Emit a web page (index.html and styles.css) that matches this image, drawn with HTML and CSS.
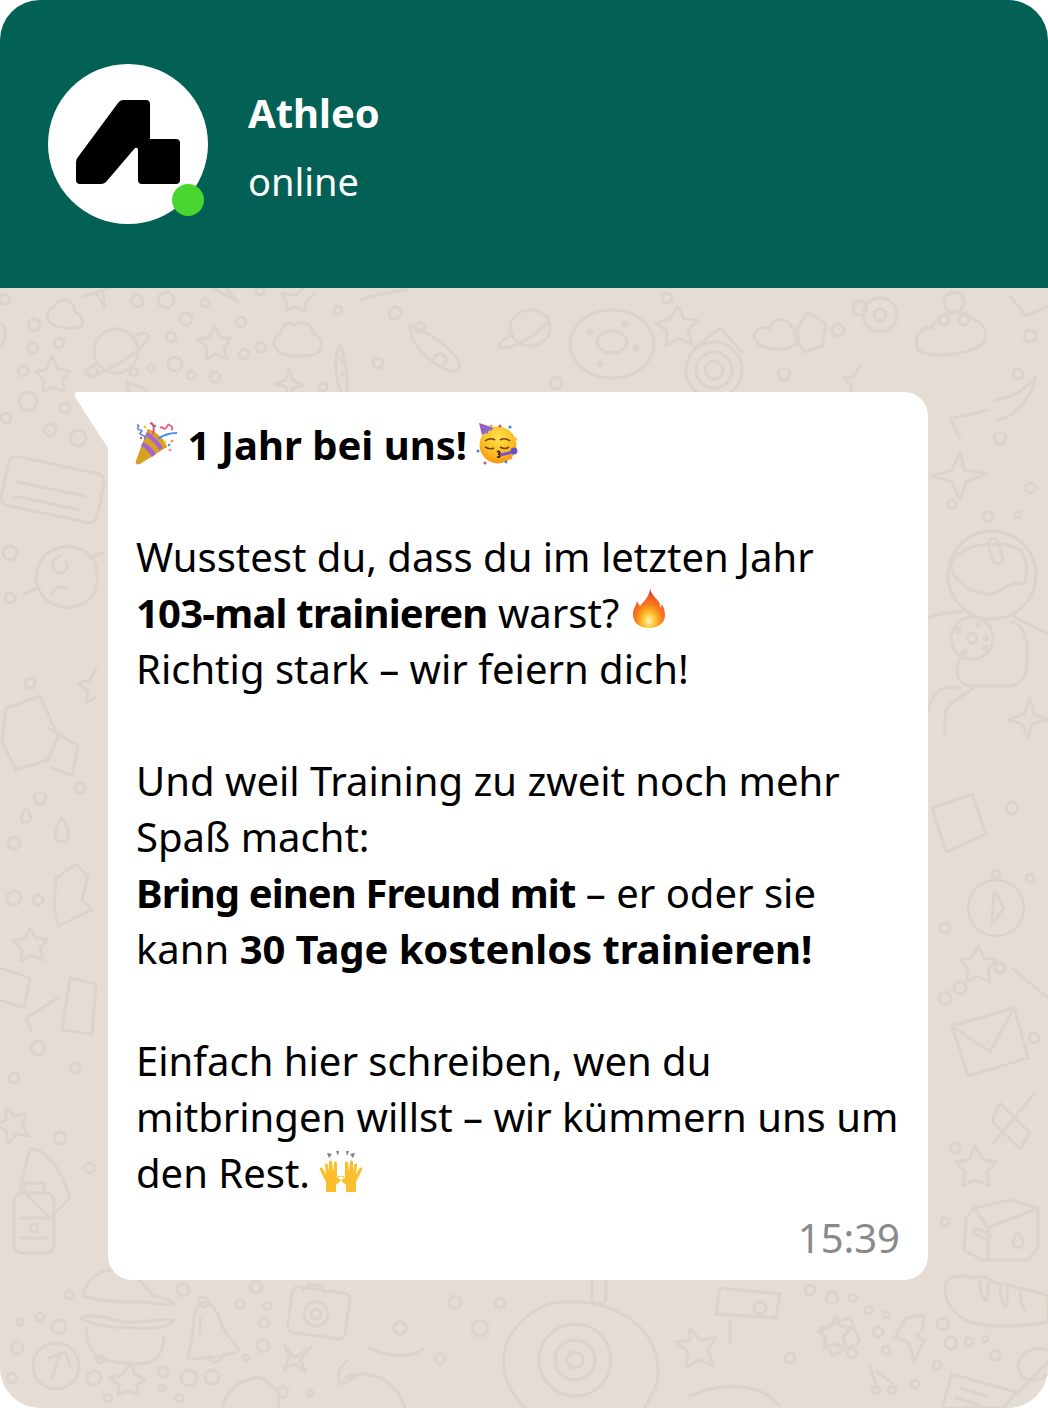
FILE: index.html
```html
<!DOCTYPE html>
<html lang="de">
<head>
<meta charset="utf-8">
<title>Athleo</title>
<link rel="stylesheet" href="styles.css">
</head>
<body>
<main class="phone">
  <header class="head">
    <div class="avatar">
      <svg class="logo" viewBox="0 0 104 84" width="104" height="84"><path fill="#000" d="M47 0H70Q74 0 74 4V39H100Q104 39 104 43V80Q104 84 100 84H66Q62 84 62 80V50Q62 47 59 48L30 82Q28 84 25 84H4Q0 84 0 80V62Q0 59 2 57L42 3Q44 0 47 0Z"/></svg>
      <span class="dot"></span>
    </div>
    <div class="who">
      <div class="name">Athleo</div>
      <div class="status">online</div>
    </div>
  </header>
  <section class="chat">
    <svg class="wall" viewBox="0 0 1048 1120" width="1048" height="1120" fill="none" stroke="#dcd4ca" stroke-width="3" stroke-linejoin="round" stroke-linecap="round">
      <g>
        <circle cx="5" cy="11" r="5"/><path d="M52 36c-7-6-6-16 2-17 2-7 13-10 18-4 3 6 2 8 4 10 7 2 8 12 4 14-9 2-20 1-28-3z"/><path d="M84 8l14-4 11-4M96 5l9 14-2-14"/><circle cx="137" cy="13" r="6"/><circle cx="166" cy="12" r="8"/><circle cx="205" cy="15" r="4"/><circle cx="260" cy="3" r="4"/><path d="M213 0l25 14-12-14"/><path d="M282 5l14 2 7-7M282 5l5 10-1 7 10-3 9 5 1-10 8-8"/><circle cx="338" cy="22" r="4"/>
        <path d="M0 36c7 2 8 16 0 22"/><circle cx="34" cy="37" r="6"/><circle cx="33" cy="60" r="5"/><circle cx="59" cy="55" r="5"/><circle cx="23" cy="83" r="5"/>
        <circle cx="116" cy="63" r="22"/><path d="M97 75c-11 6-14 10-11 12 6 3 20-4 37-14 17-11 28-22 25-26-2-3-7-2-12 0"/>
        <circle cx="186" cy="31" r="6"/><circle cx="171" cy="49" r="5"/><path d="M214 38l7 12 9 0-6 12 3 9-11-5-10 6 1-13-10-8 13-2z"/><circle cx="241" cy="34" r="5"/><circle cx="244" cy="66" r="5"/><circle cx="261" cy="59" r="5"/>
        <path d="M283 66c-10-3-12-17-3-20 1-9 9-13 15-9 7-5 17-2 18 9 8 1 12 14 4 19-9 4-24 4-34 1z"/><path d="M340 56c-7 14-5 36 2 50M340 56c6 16 9 36 7 50M340 70l5 6M342 85l5 4"/>
        <path d="M52 68l6 13 12 2-8 9 2 12-11-5-10 5 1-12-8-8 11-3z"/><circle cx="93" cy="84" r="5"/><circle cx="134" cy="84" r="4"/><circle cx="151" cy="80" r="3"/><circle cx="175" cy="76" r="7"/><circle cx="191" cy="87" r="4"/><circle cx="215" cy="89" r="5"/><path d="M289 80l3 12 11 5-10 3-3 10-4-11-11-3 11-4z"/><circle cx="323" cy="99" r="4"/>
        <path d="M127 94l20 8-6 6-12 0z"/>
        <circle cx="395" cy="25" r="6"/><circle cx="420" cy="40" r="5"/><circle cx="440" cy="72" r="6"/><circle cx="378" cy="75" r="5"/>
        <path d="M410 38c14 4 26 12 38 22 10 10 14 18 10 22-6 4-22-4-34-16-8-8-14-16-14-28z"/><path d="M360 12c18-6 30-8 46-10"/>
        <ellipse cx="530" cy="40" rx="20" ry="18"/><path d="M512 46c-10 6-16 12-12 14 8 2 30-8 44-22 6-6 6-10 2-10"/>
        <ellipse cx="612" cy="56" rx="42" ry="34"/><ellipse cx="612" cy="54" rx="15" ry="11"/><circle cx="590" cy="44" r="2"/><circle cx="636" cy="60" r="2"/><circle cx="600" cy="76" r="2"/><circle cx="625" cy="36" r="2"/>
        <circle cx="667" cy="10" r="5"/><circle cx="556" cy="95" r="6"/><path d="M678 18l6 13 14 1-10 10 4 14-14-6-12 8 1-15-11-8 14-4z"/>
        <circle cx="714" cy="82" r="28"/><circle cx="714" cy="82" r="18"/><circle cx="714" cy="82" r="9"/><path d="M694 60l26-20 22 24"/>
        <path d="M757 55c-8-8 2-20 12-14 2-10 18-14 22-2 10 2 10 16 0 20-12 4-26 2-34-4z"/><path d="M808 24l18 12-4 22-18 6-10-18z"/><circle cx="838" cy="42" r="6"/><circle cx="860" cy="20" r="7"/><circle cx="784" cy="86" r="6"/>
        <circle cx="880" cy="27" r="17"/><circle cx="880" cy="27" r="6"/><circle cx="954" cy="14" r="10"/><path d="M860 78l-6 10-10 2 8 8-1 6"/>
        <path d="M918 62c-6-14 4-24 14-22 2-14 30-22 42-8 12 2 16 20 6 26-18 10-52 12-62 4z"/><circle cx="944" cy="32" r="5"/><circle cx="964" cy="32" r="5"/><circle cx="1030" cy="48" r="6"/><circle cx="1018" cy="86" r="5"/><path d="M1010 8l16 20 22-10"/>
      </g>
      <g>
        <rect x="4" y="176" width="98" height="50" rx="8" transform="rotate(12 50 200)"/><path d="M18 194l66 14M14 208l66 14"/>
        <circle cx="28" cy="113" r="9"/><circle cx="50" cy="142" r="6"/><circle cx="6" cy="130" r="5"/><circle cx="65" cy="120" r="5"/><circle cx="78" cy="150" r="8"/>
        <path d="M36 290c0-26 28-40 50-26 14 8 16 38 0 50-14 10-46 8-50-24z"/><path d="M60 268c-8 2-10 12-4 16 8 4 14-4 10-10M66 300c-8-4-14 2-14 8"/><path d="M38 300l-14 6M90 270l14-6"/>
        <circle cx="10" cy="265" r="7"/><circle cx="10" cy="310" r="5"/><path d="M96 380l-6 12-12 3 10 8-2 12 10-6"/>
        <path d="M6 420l34-12 18 40-10 24-32 10-14-28z"/><path d="M48 440l30 18-6 30-20-8"/><circle cx="30" cy="395" r="5"/>
        <path d="M62 530c-10 14-8 24 0 24s10-10 0-24zM26 520c-6 8-6 14 0 14s6-6 0-14z"/>
        <circle cx="40" cy="510" r="6"/><circle cx="14" cy="555" r="6"/><circle cx="80" cy="500" r="5"/><circle cx="38" cy="612" r="5"/><circle cx="14" cy="610" r="7"/>
        <path d="M56 590l20-14 12 12-6 24 10 10-34 16-4-20z"/>
        <path d="M30 640l6 10 12 1-8 9 3 12-12-5-10 6 1-12-9-8 12-3z"/>
        <path d="M70 690l26 6-4 50-30-4z"/><path d="M58 710l-32 20 6 14M0 680l30 10-6 30-24-8"/><circle cx="38" cy="760" r="7"/><circle cx="14" cy="790" r="5"/><circle cx="75" cy="780" r="5"/>
        <path d="M6 820l8 8 12-2-4 12 8 10-14-2-8 10-2-14-12-4 12-6z"/><path d="M30 860c20 4 30 20 40 50l-20 20-30-30z"/><circle cx="60" cy="850" r="6"/><circle cx="90" cy="880" r="5"/>
      </g>
      <g>
        <path d="M932 188l20-6 8-18 4 18 22 4-20 8-6 18-8-18z"/><path d="M996 112c14-2 28-8 40-24-4 22-20 40-38 44"/><circle cx="1000" cy="150" r="6"/><circle cx="1030" cy="200" r="5"/><circle cx="952" cy="216" r="4"/><circle cx="988" cy="229" r="5"/><circle cx="1018" cy="227" r="3"/><path d="M954 130l34-8M960 150l-10-20"/>
        <circle cx="992" cy="287" r="44"/><path d="M950 278c6-22 50-28 70-16 8 10 8 24 4 34-12-4-20 6-32 10-16 0-34-6-42-28z"/><rect x="990" cy="270" y="250" width="10" height="26" rx="5" transform="rotate(-16 995 262)"/>
        <path d="M928 330c10-4 20-6 34-6M1012 328l36 18"/><circle cx="972" cy="350" r="21"/><circle cx="972" cy="350" r="5"/><circle cx="958" cy="342" r="2"/><circle cx="978" cy="336" r="2"/><circle cx="986" cy="350" r="2"/><circle cx="964" cy="364" r="2"/><circle cx="986" cy="360" r="2"/>
        <path d="M1012 334c14 4 18 22 14 50-2 8-8 12-14 14h-40c-16 0-20-20-8-32M975 398c-8 10-30 14-30 30v20M960 400c-18-4-30 6-32 24"/><path d="M1030 410l4 16 14 6-16 4-4 14-6-14-14-4 16-6z"/>
        <path d="M932 520l40-14 14 40-40 18z"/><circle cx="1012" cy="520" r="6"/><circle cx="996" cy="620" r="28"/><path d="M996 604l8 16-12 16 2-32z"/><circle cx="996" cy="586" r="4"/>
        <circle cx="945" cy="640" r="5"/><circle cx="1030" cy="590" r="4"/><circle cx="960" cy="700" r="6"/><circle cx="1000" cy="680" r="5"/><path d="M978 658l6 12 12 2-8 9 2 13-12-6-12 6 2-13-8-9 12-2z"/>
        <path d="M952 738l62-18 14 50-60 18z"/><path d="M952 738l38 26 24-44"/><path d="M1012 680l36 30"/><circle cx="945" cy="710" r="6"/><circle cx="1034" cy="750" r="5"/>
        <path d="M1000 815l30 30-10 16-28-28zM1034 806l-40 48"/><circle cx="955" cy="860" r="5"/><path d="M975 858l8 14 14 2-10 10 2 14-14-6-12 6 2-14-10-10 14-2z"/>
        <path d="M966 930l8-10 36-8 28 8v40l-10 12-46 0-18-10z"/><path d="M974 920l14 20 50-20M988 940v32"/><path d="M974 940l16 6v6l-16-6z"/><path d="M1018 944c-7 9-7 15 0 15s7-6 0-15z"/>
        <circle cx="945" cy="934" r="4"/>
        <path d="M945 1000c0-12 14-14 30-10 4-4 14 0 18 4 18 4 44 10 55 14v26c-20 4-50 6-70 2-16-2-33-16-33-36z"/><path d="M980 992c0 10 2 18 5 20s3-12 3-18M1000 996c0 10 2 20 5 22s2-12 2-18M1020 1000c0 10 2 20 5 22"/>
        <path d="M836 1028l4 10 11 2-8 9 3 11-11-4-11 5 2-12-8-6 11-3z"/>
        <path d="M906 1030l18-3-2 16-6 4 8 6-10 20-5-18-14-6z"/>
        <circle cx="832" cy="1010" r="6"/><circle cx="853" cy="1010" r="4"/><circle cx="869" cy="1022" r="4"/><circle cx="886" cy="1027" r="3"/><circle cx="878" cy="1044" r="5"/><circle cx="886" cy="1062" r="4"/><circle cx="852" cy="1065" r="5"/><circle cx="943" cy="1036" r="6"/><circle cx="951" cy="1055" r="6"/><circle cx="969" cy="1054" r="4"/><circle cx="985" cy="1051" r="3"/><circle cx="995" cy="1067" r="5"/><circle cx="937" cy="1077" r="4"/><circle cx="915" cy="1096" r="4"/>
        <path d="M870 1078l7 22M877 1084l14 10 4 8"/><circle cx="876" cy="1102" r="4"/><circle cx="892" cy="1102" r="4"/>
        <path d="M952 1086l64 18-12 16h-62zM960 1100l28 8M956 1110l26 8"/>
        <path d="M1048 1062c-12-4-28 0-30 16 0 10 8 14 14 14 6 0 12-2 16-6M1018 1104l30-30"/>
      </g>
      <g>
        <rect x="14" y="905" width="40" height="60" rx="8"/><rect x="24" y="895" width="20" height="10"/><path d="M20 930h28M20 950h28"/><circle cx="34" cy="940" r="4"/>
        <path d="M83 1008c2-14 14-26 30-26 20 0 32 14 40 26 4 0 20 4 20 8-10 2-20-2-30-2-20 0-40 0-60-6z"/><path d="M80 1030c14-6 30 2 44 4 16 2 34-4 50-2-2 6-16 8-28 8-20 0-50 0-66-10zM86 1040c0 10 4 24 14 30 18 6 46 8 54 2 6-4 10-14 10-24"/>
        <path d="M203 1014c-8 4-10 14-10 28 0 12-4 18-5 28 14 2 40-2 52-8-8-8-12-14-18-24-4-14-10-24-19-24z"/><circle cx="203" cy="1014" r="5"/><path d="M200 1030v16"/><path d="M209 1068c1 9 12 8 14-2"/>
        <rect x="290" y="1002" width="58" height="46" rx="6" transform="rotate(8 320 1023)"/><circle cx="316" cy="1026" r="12"/><circle cx="316" cy="1026" r="5"/><path d="M303 1002l6-6 12 2 4 8"/>
        <circle cx="56" cy="1078" r="23"/><path d="M52 1090l8-22M48 1070l18-6 4 14"/><circle cx="40" cy="1029" r="4"/><circle cx="20" cy="1034" r="3"/><circle cx="59" cy="1039" r="7"/><circle cx="17" cy="1060" r="6"/><circle cx="69" cy="1007" r="4"/><circle cx="100" cy="1071" r="4"/><circle cx="94" cy="1090" r="7"/><circle cx="12" cy="1090" r="5"/><circle cx="163" cy="1084" r="5"/><circle cx="189" cy="1090" r="8"/><circle cx="212" cy="1089" r="7"/><circle cx="162" cy="1100" r="3"/><circle cx="179" cy="1110" r="4"/><circle cx="108" cy="1110" r="4"/><circle cx="183" cy="1002" r="6"/><circle cx="256" cy="999" r="6"/><circle cx="240" cy="1016" r="4"/><circle cx="267" cy="1018" r="4"/><circle cx="264" cy="1035" r="5"/><circle cx="263" cy="1058" r="6"/><circle cx="246" cy="1070" r="3"/><circle cx="283" cy="1104" r="5"/><circle cx="310" cy="1105" r="3"/>
        <path d="M131 1075l4 12 10 4-8 6 1 10-10-4-10 4 1-10-10-7 12-2z"/><path d="M285 1058l9 12 18-12-12 14 6 12-12-8-10 6 5-12z"/>
        <path d="M222 1120c4-16 14-26 32-30 8-2 14 4 18 8 6 4 8 10 6 14 2 4 2 6 0 8"/>
        <path d="M348 1072c-8 6-12 14-8 24 6-2 12-4 16-8"/>
        <circle cx="400" cy="1040" r="6"/><circle cx="440" cy="1070" r="5"/><path d="M370 1060c20 10 44 10 54 0M345 1090c24-10 50 0 60 30"/>
        <circle cx="575" cy="1072" r="36"/><circle cx="575" cy="1072" r="20"/><circle cx="575" cy="1072" r="8"/><path d="M505 1060c10-30 40-50 70-46 30 0 70 16 80 50M505 1060c-6 30 10 50 20 60M655 1064c10 30-6 46-10 56"/>
        <path d="M592 982v28c0 8 14 8 14 0v-28"/><circle cx="455" cy="1014" r="6"/><circle cx="480" cy="1040" r="8"/><circle cx="500" cy="1015" r="5"/>
        <path d="M720 1000l60 6-4 24-60-4zM730 1032v24"/><path d="M690 1040l10 12 16-2-8 12 6 16-16-6-12 8 2-16-12-10 14-2z"/><circle cx="790" cy="1070" r="5"/>
        <path d="M820 1040l30-10 10 24-28 14z"/><path d="M690 1108c30-14 70-14 90 10"/><circle cx="760" cy="1020" r="6"/><circle cx="810" cy="1002" r="5"/>
      </g>
    </svg>
    <article class="bubble">
      <svg class="tail" viewBox="0 0 34 56" width="34" height="56"><path fill="#fff" d="M34 0H4Q-1 0 1 5L34 56Z"/></svg>
      <p class="line"><svg class="emoji popper" viewBox="0 0 44 44" width="44" height="44">
        <path d="M2 40 L14 8 L33 26 Z" fill="#e3a92a"/><path d="M2 40c-1 3 1 4 4 3l27-17c-2-8-12-16-19-18z" fill="#d9a028"/><path d="M9 21c5 2 10 7 13 12l-4 3c-3-5-7-9-11-11zM13 11c6 3 12 9 16 16l-4 2c-3-6-9-12-14-14z" fill="#a565c9"/><path d="M24 18c5-4 10-6 19-6M32 14v1" stroke="#4a8ef0" stroke-width="2" fill="none"/><path d="M3 4c5 0-3 4 3 5s-4 3 2 5 1 3 3 4" stroke="#5585e8" stroke-width="1.6" fill="none"/><path d="M16 2c5 1 4 6 3 11" stroke="#e8476a" stroke-width="2" fill="none"/><path d="M26 7c3-3 3 3 6 0s1-5 5-2-2 4 2 3" stroke="#ee5f82" stroke-width="1.8" fill="none"/><circle cx="11" cy="6" r="1.4" fill="#f2c22e"/><circle cx="35" cy="24" r="1.3" fill="#4a8ef0"/><circle cx="38" cy="20" r="1.5" fill="#f0a040"/><circle cx="36" cy="29" r="1.5" fill="#f58bb0"/><circle cx="31" cy="21" r="1.5" fill="#f5cd3a"/><circle cx="7" cy="17" r="1.2" fill="#e8476a"/><circle cx="21" cy="5" r="1.3" fill="#4a8ef0"/>
      </svg> <b>1 Jahr bei uns!</b> <svg class="emoji face" viewBox="0 0 44 44" width="44" height="44">
        <defs><radialGradient id="skin" cx="50%" cy="30%" r="75%"><stop offset="0" stop-color="#ffe04a"/><stop offset=".6" stop-color="#fcbc22"/><stop offset="1" stop-color="#f58f10"/></radialGradient></defs>
        <circle cx="22" cy="24" r="18.5" fill="url(#skin)"/><path d="M6 14l-3-12 15 5z" fill="#b84fb0"/><path d="M5 6l11 3M6 10l6 2" stroke="#4a8ef0" stroke-width="1.6"/>
        <path d="M9 20q5-4 10-1M24 19q5-3 10 1M9 26q5 3 9 1M24 26q5 3 9 0" stroke="#6e4213" stroke-width="1.6" fill="none"/><path d="M21 31c3-2 4 2 1 2 3 0 3 4-1 3" stroke="#40230a" stroke-width="1.8" fill="none"/><path d="M24 34l13-3" stroke="#7a55d0" stroke-width="3"/><circle cx="38" cy="30" r="3.4" fill="#6a50c8"/><circle cx="34" cy="6" r="1.6" fill="#3c80e8"/><circle cx="24" cy="5" r="1.5" fill="#e8476a"/><circle cx="2" cy="30" r="1.5" fill="#3c80e8"/><circle cx="9" cy="42" r="1.5" fill="#e8476a"/><circle cx="40" cy="18" r="1.4" fill="#f5cd3a"/><circle cx="15" cy="5" r="1.5" fill="#f0a040"/><circle cx="30" cy="41" r="1.4" fill="#3c80e8"/><circle cx="35" cy="37" r="1.4" fill="#f0a040"/>
      </svg></p>
      <p class="line blank">&nbsp;</p>
      <p class="line">Wusstest du, dass du im letzten Jahr</p>
      <p class="line"><b class="tight">103-mal trainieren</b> warst? <svg class="emoji flame" viewBox="0 0 44 44" width="44" height="44">
        <defs><radialGradient id="flamegrad" cx="50%" cy="82%" r="70%"><stop offset="0" stop-color="#fff6b8"/><stop offset=".28" stop-color="#fdc22e"/><stop offset=".62" stop-color="#f9771c"/><stop offset="1" stop-color="#e8432a"/></radialGradient></defs>
        <path fill="url(#flamegrad)" d="M24 2c1 6 5 9 9 14 1 2 1 4 1 6 1-1 2-3 2-4 2 4 3 8 3 11 0 8-7 13-16 13S7 37 7 28c0-5 3-8 4-13 1 2 2 4 3 5 4-5 10-10 10-18z"/>
      </svg></p>
      <p class="line">Richtig stark – wir feiern dich!</p>
      <p class="line blank">&nbsp;</p>
      <p class="line">Und weil Training zu zweit noch mehr</p>
      <p class="line">Spaß macht:</p>
      <p class="line"><b class="tighter">Bring einen Freund mit</b> – er oder sie</p>
      <p class="line">kann <b class="snug">30 Tage kostenlos trainieren!</b></p>
      <p class="line blank">&nbsp;</p>
      <p class="line">Einfach hier schreiben, wen du</p>
      <p class="line">mitbringen willst – wir kümmern uns um</p>
      <p class="line">den Rest. <svg class="emoji hands" viewBox="0 0 44 44" width="44" height="44">
        <path fill="#fbbf2e" d="M7 42V32L1 20c-1-3 2-3 3-1l3 5-1-9c0-2 2-2 3 0l1 7 0-10c0-2 3-2 3 0l1 10 1-9c0-2 3-2 3 0v15l5-2c2-1 3 1 2 2l-8 7v7zM37 42V32l6-12c1-3-2-3-3-1l-3 5 1-9c0-2-2-2-3 0l-1 7 0-10c0-2-3-2-3 0l-1 10-1-9c0-2-3-2-3 0v15l-5-2c-2-1-3 1-2 2l8 7v7z"/>
        <path fill="#7d7d85" d="M8 3l5 1-3 4zM17 1h3l-1 5zM27 1h3l-2 5zM36 3l-5 1 3 4z"/>
      </svg></p>
      <div class="time">15:39</div>
    </article>
  </section>
</main>
</body>
</html>
```
FILE: styles.css
```css
html, body {
  margin: 0;
  padding: 0;
  background: #fff;
}
.phone {
  width: 1048px;
  height: 1408px;
  border-radius: 40px;
  overflow: hidden;
  display: flex;
  flex-direction: column;
  font-family: "Noto Sans", sans-serif;
  color: #000;
}
.head {
  height: 288px;
  flex: none;
  background: #036055;
  box-sizing: border-box;
  padding: 64px 48px 0;
  display: flex;
  align-items: flex-start;
  gap: 40px;
  color: #fff;
}
.avatar {
  position: relative;
  width: 160px;
  height: 160px;
  border-radius: 50%;
  background: #fff;
  display: flex;
  align-items: center;
  justify-content: center;
}
.logo {
  display: block;
  transform: translateY(-2px);
}
.dot {
  position: absolute;
  left: 124px;
  top: 120px;
  width: 32px;
  height: 32px;
  border-radius: 50%;
  background: #49d62f;
}
.who {
  display: flex;
  flex-direction: column;
  gap: 14px;
  padding-top: 21px;
}
.name {
  font-size: 40px;
  line-height: 56px;
  font-weight: 700;
}
.status {
  font-size: 38px;
  line-height: 52px;
}
.chat {
  position: relative;
  flex: 1;
  background: #e5ddd5;
  box-sizing: border-box;
  padding: 104px 120px 0 108px;
}
.wall {
  position: absolute;
  left: 0;
  top: 0;
  filter: blur(0.6px);
}
.bubble {
  position: relative;
  width: 820px;
  height: 888px;
  box-sizing: border-box;
  background: #fff;
  border-radius: 0 24px 24px 24px;
  padding: 25px 28px 0 28px;
  font-size: 40px;
  line-height: 56px;
}
.tail {
  position: absolute;
  left: -34px;
  top: 0;
}
.line {
  margin: 0;
  height: 56px;
  white-space: nowrap;
}
.tight {
  letter-spacing: -0.8px;
}
.tighter {
  letter-spacing: -0.9px;
}
.snug {
  letter-spacing: -0.07px;
}
.emoji {
  display: inline-block;
  vertical-align: -6px;
}
.popper {
  margin-left: -2px;
  margin-right: -1px;
  vertical-align: -5px;
}
.face {
  margin-left: -1px;
  vertical-align: -5px;
}
.flame {
  margin-left: -4px;
  vertical-align: -2px;
}
.hands {
  margin-left: -1px;
}
.time {
  padding-top: 9px;
  text-align: right;
  font-size: 40px;
  line-height: 56px;
  color: #8a8a8a;
}
```
